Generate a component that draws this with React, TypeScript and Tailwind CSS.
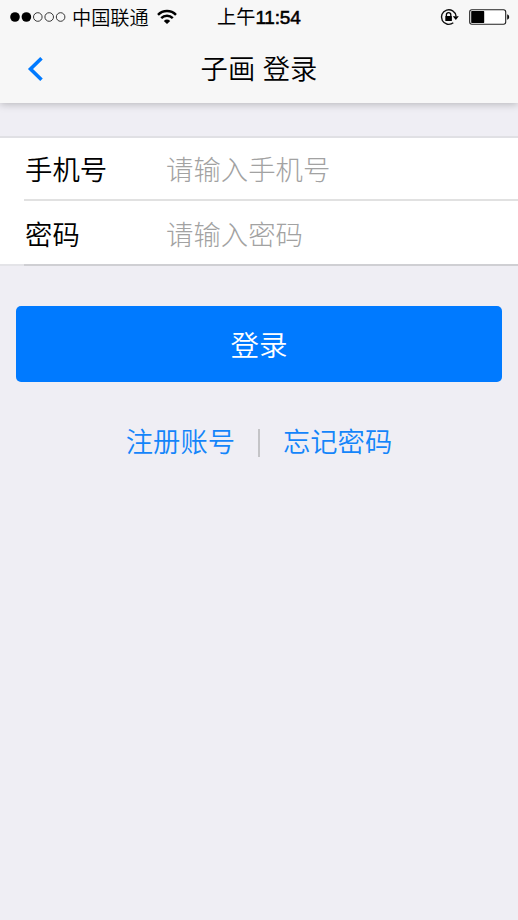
function StatusBar() {
  return (
    <div className="flex h-[34px] items-center">
      <svg className="ml-[9px] shrink-0" width="58" height="12" viewBox="0 0 58 12">
        <circle cx="6" cy="6" r="4.8" fill="#000" />
        <circle cx="17.4" cy="6" r="4.8" fill="#000" />
        {[28.8, 40.2, 51.6].map((x) => (
          <circle key={x} cx={x} cy="6" r="4.3" fill="none" stroke="#222" strokeWidth="0.9" />
        ))}
      </svg>
      <span className="ml-[5px] w-[77px] shrink-0 pt-[3px] text-[19.2px] leading-[34px] font-[350] whitespace-nowrap">中国联通</span>
      <svg className="ml-[7px] shrink-0" width="22" height="16" viewBox="0 0 22 16" fill="none" stroke="#000" strokeWidth="2.5">
        <path d="M2 5.8C7 .8 15 .8 20 5.8" />
        <path d="M5.2 9.1C8.4 6 13.6 6 16.8 9.1" />
        <path d="M7.8 11.9Q11 9.2 14.2 11.9L11 15Z" fill="#000" stroke="none" />
      </svg>
      <div className="ml-[39px] flex w-[85px] shrink-0 items-baseline pt-px leading-[34px] whitespace-nowrap">
        <span className="text-[19.2px]">上午</span>
        <span className="font-['Liberation_Sans',sans-serif] text-[19px] tracking-[-0.2px] [-webkit-text-stroke:0.55px_#000]">11:54</span>
      </div>
      <svg className="ml-[137px] shrink-0" width="20" height="20" viewBox="0 0 20 20" fill="none">
        <path d="M17 9.2A7.3 7.3 0 1 0 14.3 15.8" stroke="#111" strokeWidth="1.4" />
        <path d="M13.8 9.2h6l-3 3.7Z" fill="#000" />
        <path d="M7.4 9.5V7.8a2.2 2.2 0 0 1 4.4 0v1.7" stroke="#000" strokeWidth="1.3" />
        <rect x="6.3" y="9" width="6.6" height="5" rx=".5" fill="#000" />
      </svg>
      <svg className="ml-[10px] shrink-0" width="41" height="16" viewBox="0 0 41 16">
        <rect x=".7" y=".7" width="36" height="14.6" rx="2.2" fill="#fff" stroke="#222" strokeWidth="1.1" />
        <rect x="2.2" y="2.1" width="13" height="11.8" rx=".6" fill="#000" />
        <path d="M38.2 5.3q2 .6 2 2.7t-2 2.7Z" fill="#111" />
      </svg>
    </div>
  )
}

function Field({ label, placeholder, type }: { label: string; placeholder: string; type: string }) {
  return (
    <label className="flex items-center pl-[25px] text-[27.4px] leading-[40px] font-[350]">
      <span className="w-[141px] shrink-0 text-black">{label}</span>
      <input
        type={type}
        placeholder={placeholder}
        className="h-[40px] min-w-0 flex-1 bg-transparent font-light outline-none placeholder:text-[#a2a2a2]"
      />
    </label>
  )
}

export default function App() {
  return (
    <div className="flex h-[920px] w-[518px] flex-col overflow-hidden bg-[#efeef4] font-['Liberation_Sans','Noto_Sans_CJK_SC',sans-serif] text-black">
      <header className="h-[103px] shrink-0 bg-[#f7f7f7] shadow-[0_1px_8px_rgba(0,0,0,0.25)]">
        <StatusBar />
        <div className="grid h-[69px] grid-cols-[1fr_auto_1fr] items-center">
          <button aria-label="返回" className="ml-[27px] w-6">
            <svg width="18" height="26" viewBox="0 0 18 26" fill="none" stroke="#007aff" strokeWidth="3.6">
              <path d="M14.5 2.3 3.5 13l11 10.7" />
            </svg>
          </button>
          <h1 className="pt-[2px] text-[27.3px] leading-[40px] font-[350]">子画 登录</h1>
        </div>
      </header>
      <form className="mt-[33px] flex flex-col">
        <div className="border-t-2 border-[#e0e0e4] bg-white">
          <div className="h-[61px] pt-[13px]">
            <Field label="手机号" placeholder="请输入手机号" type="text" />
          </div>
          <div className="ml-6 h-[2px] bg-[#e1e1e1]" />
          <div className="h-[63px] pt-[15px]">
            <Field label="密码" placeholder="请输入密码" type="password" />
          </div>
        </div>
        <div className="flex h-[2px] bg-[#e4e4e8] pl-6">
          <div className="flex-1 bg-[#cfcfd3]" />
        </div>
        <button type="button" className="mx-4 mt-[40px] h-[76px] rounded-[5px] bg-[#007aff] pt-[5px] text-[28.5px] font-[350] text-white">
          登录
        </button>
      </form>
      <nav className="mt-[41px] flex h-[40px] items-center justify-center text-[27.3px] leading-[40px] font-[350] text-[#1485fa]">
        <a>注册账号</a>
        <span className="mx-[23px] h-7 w-[2px] bg-[#c4c4c7]" />
        <a>忘记密码</a>
      </nav>
    </div>
  )
}
